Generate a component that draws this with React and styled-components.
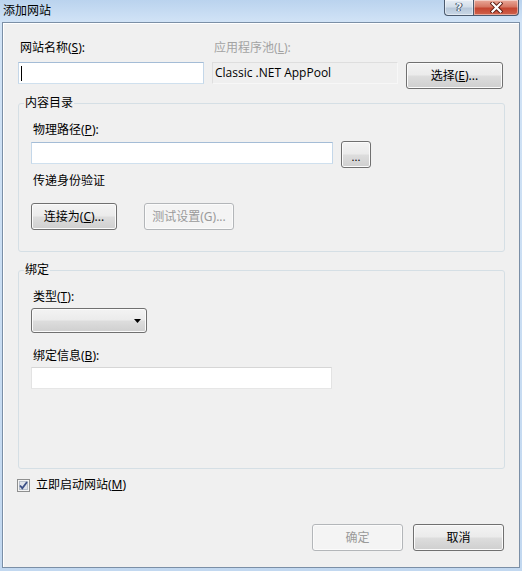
import React from 'react';
import styled, { createGlobalStyle } from 'styled-components';

const Global = createGlobalStyle`
  html, body { margin: 0; padding: 0; }
  body {
    background: #c4daf1;
    font-family: "Noto Sans", "Noto Sans CJK SC", sans-serif;
    -webkit-font-smoothing: antialiased;
  }
`;

const Window = styled.div`
  width: 522px;
  height: 571px;
  box-sizing: border-box;
  display: flex;
  flex-direction: column;
  background: linear-gradient(180deg, #bad3ee 0px, #d1e3f6 22px, #c2d8f0 100%);
  font-size: 12px;
  color: #000;
`;

const TitleBar = styled.div`
  height: 22px;
  flex: none;
  display: flex;
  align-items: flex-start;
  padding: 0 3px;
`;

const Title = styled.div`
  flex: 1;
  line-height: 22px;
  font-size: 12px;
  color: #000;
`;

const CaptionGroup = styled.div`
  display: flex;
`;

const CaptionButton = styled.div`
  width: ${p => p.$w}px;
  height: 16px;
  box-sizing: border-box;
  display: flex;
  align-items: center;
  justify-content: center;
  border: 1px solid #4b5a6e;
  border-top: none;
  border-radius: ${p => (p.$close ? '0 0 4px 0' : '0 0 0 4px')};
  ${p => (p.$close ? '' : 'border-right: none;')}
  background: ${p =>
    p.$close
      ? 'linear-gradient(180deg, #e9a99a 0%, #d67763 45%, #c44530 55%, #d0634c 100%)'
      : 'linear-gradient(180deg, #e6edf5 0%, #d3dee9 45%, #b8c8da 55%, #c9d7e6 100%)'};
  box-shadow: inset 0 0 0 1px rgba(255, 255, 255, 0.45);
`;

const HelpGlyph = styled.span`
  font-family: "DejaVu Sans", sans-serif;
  font-weight: bold;
  font-size: 11px;
  line-height: 11px;
  color: #f4f7fb;
  text-shadow: 0 0 1px #3a4a5e, 0 0 1px #3a4a5e, 1px 0 0 #3a4a5e, -1px 0 0 #3a4a5e;
`;

const Client = styled.div`
  flex: 1;
  margin: 0 2px 3px 2px;
  border: 1px solid #7b8fa6;
  background: #f0f0f0;
  box-shadow: inset 1px 1px 0 #ffffff;
  display: flex;
  flex-direction: column;
  padding: 17px 14px 16px 15px;
  box-sizing: border-box;
`;

const TopGrid = styled.div`
  display: grid;
  grid-template-columns: 186px 186px 97px;
  column-gap: 8px;
  row-gap: 6px;
  align-items: start;
`;

const Label = styled.div`
  line-height: 16px;
  font-size: 12px;
  padding-left: 2px;
  margin-top: ${p => p.$mt || 0}px;
  color: ${p => (p.$disabled ? '#a3a3a3' : '#000')};
  white-space: nowrap;
`;

const TextBox = styled.div`
  position: relative;
  width: ${p => (p.$w ? `${p.$w}px` : 'auto')};
  height: 22px;
  box-sizing: border-box;
  margin-top: ${p => p.$mt || 0}px;
  background: #fff;
  border: 1px solid;
  border-color: ${p =>
    p.$hot ? '#a4bcd6 #c4d7e9 #cfe0ee #c4d7e9' : '#d6d6d6 #e3e3e3 #e6e6e6 #e3e3e3'};
`;

const Caret = styled.span`
  position: absolute;
  left: 2px;
  top: 3px;
  width: 1px;
  height: 15px;
  background: #000;
`;

const ReadOnlyBox = styled.div`
  height: 22px;
  box-sizing: border-box;
  background: #efefef;
  border: 1px solid;
  border-color: #dedede #f7f7f7 #f7f7f7 #dedede;
  line-height: 20px;
  padding-left: 2px;
  font-family: "Open Sans", "Noto Sans", sans-serif;
  font-size: 12px;
  color: #000;
  white-space: nowrap;
`;

const Button = styled.button`
  width: ${p => p.$w}px;
  height: 27px;
  box-sizing: border-box;
  margin: 0;
  margin-top: ${p => p.$mt || 0}px;
  padding: 0;
  flex: none;
  font-family: "Noto Sans", "Noto Sans CJK SC", sans-serif;
  font-size: 12px;
  line-height: 16px;
  border-radius: 3px;
  border: 1px solid ${p => (p.disabled ? '#b3b6b9' : '#707070')};
  color: ${p => (p.disabled ? '#9a9a9a' : '#000')};
  background: ${p =>
    p.disabled
      ? '#f4f4f4'
      : 'linear-gradient(180deg, #f3f3f3 0%, #ebebeb 48%, #dddddd 52%, #cfcfcf 100%)'};
  box-shadow: inset 0 0 0 1px #fbfbfb;
  display: flex;
  align-items: center;
  justify-content: center;
  cursor: default;
`;

const GroupBox = styled.fieldset`
  margin: ${p => p.$mt}px 0 0 0;
  padding: 11px 12px ${p => p.$pb}px 12px;
  border: 1px solid #d5dfe5;
  border-radius: 3px;
  min-width: 0;
`;

const Legend = styled.legend`
  padding: 0 1px;
  margin-left: -7px;
  line-height: 16px;
  font-size: 12px;
  color: #000;
`;

const Row = styled.div`
  display: flex;
  align-items: flex-start;
  gap: ${p => p.$gap || 0}px;
  margin-top: ${p => p.$mt || 0}px;
`;

const Combo = styled.div`
  width: 116px;
  height: 25px;
  box-sizing: border-box;
  margin-top: ${p => p.$mt || 0}px;
  border: 1px solid #707070;
  border-radius: 3px;
  background: linear-gradient(180deg, #f3f3f3 0%, #ebebeb 48%, #dddddd 52%, #cfcfcf 100%);
  box-shadow: inset 0 0 0 1px #fbfbfb;
  display: flex;
  align-items: center;
  justify-content: flex-end;
  padding-right: 5px;
`;

const CheckRow = styled.label`
  display: flex;
  align-items: center;
  gap: 6px;
  margin-top: 8px;
  margin-left: -1px;
  line-height: 16px;
  font-size: 12px;
`;

const Footer = styled.div`
  margin-top: auto;
  display: flex;
  justify-content: flex-end;
  gap: 10px;
  margin-right: 1px;
`;

const Dots = styled.span`
  font-size: 11px;
  line-height: 11px;
  margin-top: 4px;
`;

function CloseX() {
  return (
    <svg width="13" height="11" viewBox="0 0 13 11">
      <path d="M2.5 1.5 L10.5 9.5 M10.5 1.5 L2.5 9.5" stroke="#5a1a10" strokeWidth="4" strokeLinecap="square" />
      <path d="M2.5 1.5 L10.5 9.5 M10.5 1.5 L2.5 9.5" stroke="#ffffff" strokeWidth="2.2" strokeLinecap="square" />
    </svg>
  );
}

function CheckIcon() {
  return (
    <svg width="13" height="13" viewBox="0 0 13 13">
      <rect x="0.5" y="0.5" width="12" height="12" fill="#f4f4f4" stroke="#8e8f8f" />
      <rect x="2.5" y="2.5" width="8" height="8" fill="#dfe3ea" stroke="#b8c0cc" />
      <path d="M3 6.5 L5.3 9.2 L10 3" fill="none" stroke="#3b4f86" strokeWidth="1.8" />
    </svg>
  );
}

function Arrow() {
  return (
    <svg width="7" height="4" viewBox="0 0 7 4">
      <polygon points="0,0 7,0 3.5,4" fill="#000" />
    </svg>
  );
}

export default function App() {
  return (
    <>
      <Global />
      <Window>
        <TitleBar>
          <Title>添加网站</Title>
          <CaptionGroup>
            <CaptionButton $w={29}>
              <HelpGlyph>?</HelpGlyph>
            </CaptionButton>
            <CaptionButton $w={46} $close>
              <CloseX />
            </CaptionButton>
          </CaptionGroup>
        </TitleBar>
        <Client>
          <TopGrid>
            <Label>网站名称(<u>S</u>):</Label>
            <Label $disabled>应用程序池(<u>L</u>):</Label>
            <div />
            <TextBox $hot>
              <Caret />
            </TextBox>
            <ReadOnlyBox>Classic .NET AppPool</ReadOnlyBox>
            <Button $w={97}>选择(<u>E</u>)...</Button>
          </TopGrid>

          <GroupBox $mt={6} $pb={21}>
            <Legend>内容目录</Legend>
            <Label>物理路径(<u>P</u>):</Label>
            <Row $mt={4} $gap={8}>
              <TextBox $w={302} $hot />
              <Button $w={30} $mt={-1}>
                <Dots>...</Dots>
              </Button>
            </Row>
            <Label $mt={5}>传递身份验证</Label>
            <Row $mt={14} $gap={27}>
              <Button $w={86}>连接为(<u>C</u>)...</Button>
              <Button $w={90} disabled>测试设置(G)...</Button>
            </Row>
          </GroupBox>

          <GroupBox $mt={10} $pb={79}>
            <Legend>绑定</Legend>
            <Label>类型(<u>T</u>):</Label>
            <Combo $mt={3}>
              <Arrow />
            </Combo>
            <Label $mt={15}>绑定信息(<u>B</u>):</Label>
            <TextBox $w={301} $mt={3} />
          </GroupBox>

          <CheckRow>
            <CheckIcon />
            <span>立即启动网站(<u>M</u>)</span>
          </CheckRow>

          <Footer>
            <Button $w={91} disabled>确定</Button>
            <Button $w={91}>取消</Button>
          </Footer>
        </Client>
      </Window>
    </>
  );
}
